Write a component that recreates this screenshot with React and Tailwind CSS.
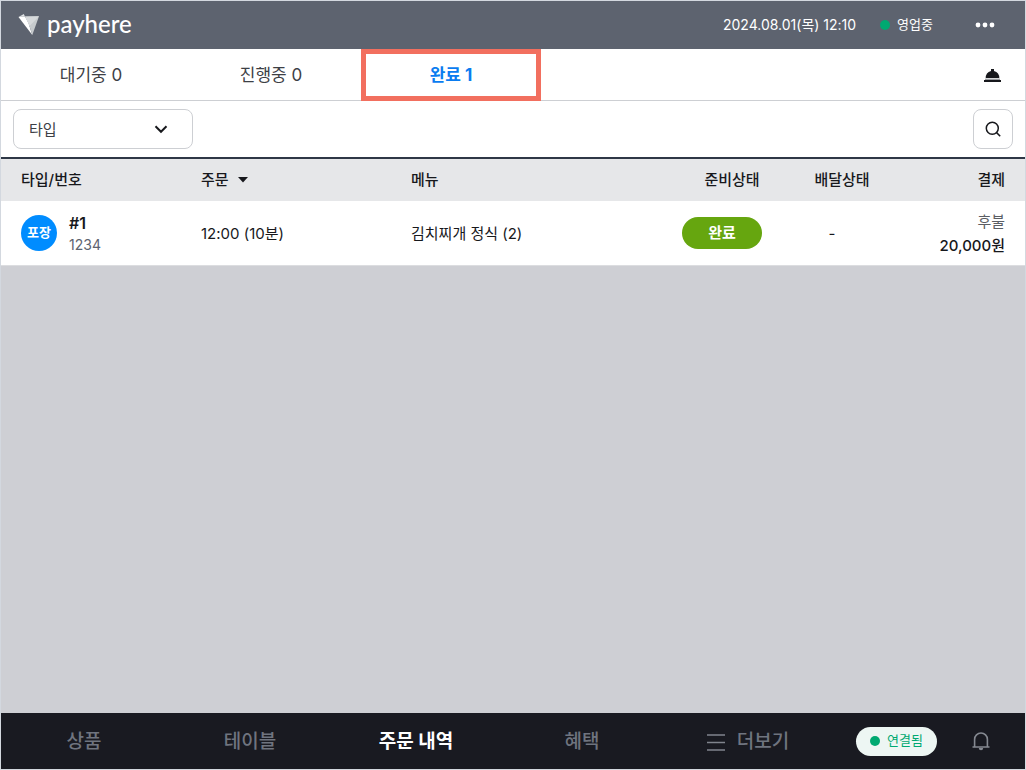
const tabs = [
  { label: "대기중", count: 0 },
  { label: "진행중", count: 0 },
  { label: "완료", count: 1, active: true },
];

const orders = [
  {
    type: "포장",
    no: "#1",
    code: "1234",
    time: "12:00 (10분)",
    menu: "김치찌개 정식 (2)",
    status: "완료",
    delivery: "-",
    payType: "후불",
    price: "20,000원",
  },
];

const navItems = [
  { label: "상품" },
  { label: "테이블" },
  { label: "주문 내역", active: true },
  { label: "혜택" },
  { label: "더보기", icon: true },
];

function Logo() {
  return (
    <a href="#" className="flex items-center gap-2 pb-0.5">
      <svg width="22" height="21" viewBox="0 0 22 21">
        <path d="M1.5 3 6.8 0 8 2.6z" fill="#dfe2e4" />
        <path d="M1.5 3 8 2.6 11.5 9 15.3 21z" fill="#ffffff" />
        <path d="M8 2.6 22 2.2 15.3 21 11.5 9z" fill="#c6cacd" />
        <path d="M8 2.6 22 2.2 12.6 12z" fill="#d6d9db" />
      </svg>
      <span className="font-[Lato,sans-serif] text-2xl leading-7 font-medium text-white">payhere</span>
    </a>
  );
}

function Header() {
  return (
    <header className="flex h-12 items-center justify-between bg-[#5d636f] pr-[30px] pl-4 text-white">
      <Logo />
      <div className="flex items-center">
        <time className="text-sm">2024.08.01(목) 12:10</time>
        <span className="ml-6 size-[10px] rounded-full bg-[#00a971]" />
        <span className="ml-[7px] text-[13px]">영업중</span>
        <button type="button" aria-label="메뉴" className="ml-[42px]">
          <svg width="20" height="6" viewBox="0 0 20 6" fill="#fff">
            <circle cx="3" cy="3" r="2.4" />
            <circle cx="10" cy="3" r="2.4" />
            <circle cx="17" cy="3" r="2.4" />
          </svg>
        </button>
      </div>
    </header>
  );
}

function Tabs() {
  return (
    <div className="flex h-[52px] items-start justify-between border-b border-[#cdcfd3] pr-6">
      <div className="flex">
        {tabs.map((tab) => (
          <button
            key={tab.label}
            type="button"
            className={
              tab.active
                ? "h-[52px] w-[180px] border-5 border-[#f26f5f] pt-0.5 text-[17px] font-bold text-[#0a7cf0]"
                : "h-[52px] w-[180px] pt-0.5 text-[17px] text-[#3d4046]"
            }
          >
            {tab.label} {tab.count}
          </button>
        ))}
      </div>
      <button type="button" aria-label="호출" className="flex h-[52px] items-center pt-0.5">
        <svg width="17" height="14" viewBox="0 0 17 14" fill="#17181c">
          <path d="M7 0h3v1.9a7.3 7.3 0 0 1 5.3 7.1H1.7A7.3 7.3 0 0 1 7 1.9z" />
          <path d="M1 9.6h15v1.4H1z" fill="#9a9ca0" />
          <path d="M0 11h17v2H0z" />
        </svg>
      </button>
    </div>
  );
}

function Filters() {
  return (
    <div className="flex h-14 items-center justify-between px-3">
      <div className="relative">
        <select
          aria-label="타입"
          className="h-10 w-[180px] appearance-none rounded-lg border border-[#cdcfd3] bg-white pt-0.5 pl-[15px] text-[15px] text-[#3d4046]"
        >
          <option>타입</option>
        </select>
        <svg
          className="pointer-events-none absolute top-4 right-[25px]"
          width="14"
          height="9"
          viewBox="0 0 14 9"
          fill="none"
          stroke="#17181c"
          strokeWidth="2"
        >
          <path d="M1.5 1.3 7 6.8l5.5-5.5" />
        </svg>
      </div>
      <button
        type="button"
        aria-label="검색"
        className="flex size-10 items-center justify-center rounded-lg border border-[#cdcfd3]"
      >
        <svg width="16" height="16" viewBox="0 0 16 16" fill="none" stroke="#17181c" strokeWidth="1.5">
          <circle cx="7.3" cy="7.3" r="6" />
          <path d="m11.6 11.6 3.6 3.6" />
        </svg>
      </button>
    </div>
  );
}

function OrderTable() {
  return (
    <table className="w-full table-fixed border-t-2 border-[#2e3746] text-[15px] text-[#17181c]">
      <colgroup>
        <col className="w-[200px]" />
        <col className="w-[210px]" />
        <col />
        <col className="w-[110px]" />
        <col className="w-[110px]" />
        <col className="w-[128px]" />
      </colgroup>
      <thead className="bg-[#e6e7e9]">
        <tr className="h-[43px]">
          <th className="pl-5 text-left font-medium">타입/번호</th>
          <th className="text-left font-medium">
            <button type="button" className="flex items-center gap-[9px]">
              주문
              <svg width="10" height="6" viewBox="0 0 10 6" fill="#17181c">
                <path d="M0 0h10L5 5.5z" />
              </svg>
            </button>
          </th>
          <th className="text-left font-medium">메뉴</th>
          <th className="font-medium">준비상태</th>
          <th className="font-medium">배달상태</th>
          <th className="pr-5 text-right font-medium">결제</th>
        </tr>
      </thead>
      <tbody className="bg-white">
        {orders.map((o) => (
          <tr key={o.no} className="h-16 border-b border-[#dcdde0]">
            <td className="pl-5">
              <div className="flex items-center gap-3">
                <span className="flex size-9 items-center justify-center rounded-full bg-[#008cff] text-[13px] font-bold text-white">
                  {o.type}
                </span>
                <div className="pt-0.5">
                  <p className="text-base leading-[22px] font-semibold">{o.no}</p>
                  <p className="text-sm leading-[22px] text-[#5d636f]">{o.code}</p>
                </div>
              </div>
            </td>
            <td className="pt-0.5">{o.time}</td>
            <td className="pt-0.5">{o.menu}</td>
            <td className="pr-5">
              <span className="mx-auto flex h-8 w-20 items-center justify-center rounded-full bg-[#66a60f] text-[15px] font-bold text-white">
                {o.status}
              </span>
            </td>
            <td className="pt-0.5 pr-5 text-center">{o.delivery}</td>
            <td className="pt-0.5 pr-5 text-right">
              <p className="leading-6 text-[#5b5e64]">{o.payType}</p>
              <p className="leading-6 font-medium">{o.price}</p>
            </td>
          </tr>
        ))}
      </tbody>
    </table>
  );
}

function BottomNav() {
  return (
    <footer className="flex h-14 items-center bg-[#191a21]">
      <nav className="grid flex-1 grid-cols-5 pt-0.5">
        {navItems.map((item) => (
          <a
            key={item.label}
            href="#"
            className={
              item.active
                ? "flex items-center justify-center text-[19px] font-bold text-white"
                : "flex items-center justify-center gap-3 text-[19px] font-medium text-[#6f747f]"
            }
          >
            {item.icon && (
              <svg width="18" height="17" viewBox="0 0 18 17" fill="none" stroke="#80848d" strokeWidth="1.6">
                <path d="M0 1h18M0 8.5h18M0 16h18" />
              </svg>
            )}
            {item.label}
          </a>
        ))}
      </nav>
      <div className="flex w-[194px] items-center justify-between pr-[35px] pl-[25px]">
        <span className="flex h-[29px] w-[81px] items-center justify-center gap-[7px] rounded-full bg-[#edf6f3] text-[13px] text-[#00a971]">
          <span className="size-[10px] rounded-full bg-[#00a971]" />
          연결됨
        </span>
        <button type="button" aria-label="알림">
          <svg width="18" height="20" viewBox="0 0 18 20" fill="none" stroke="#858991" strokeWidth="1.6">
            <path d="M0.5 16h17M2.6 15.8V8.4a6.4 6.4 0 0 1 12.8 0v7.4" />
            <path d="M6.8 17a2.2 2.2 0 0 0 4.4 0z" fill="#858991" stroke="none" />
          </svg>
        </button>
      </div>
    </footer>
  );
}

export default function App() {
  return (
    <div className="flex min-h-screen flex-col border border-[#d3d8df] bg-[#cecfd4] font-[Inter,'Noto_Sans_CJK_KR',sans-serif]">
      <Header />
      <div className="bg-white">
        <Tabs />
        <Filters />
      </div>
      <main className="flex-1">
        <OrderTable />
      </main>
      <BottomNav />
    </div>
  );
}
